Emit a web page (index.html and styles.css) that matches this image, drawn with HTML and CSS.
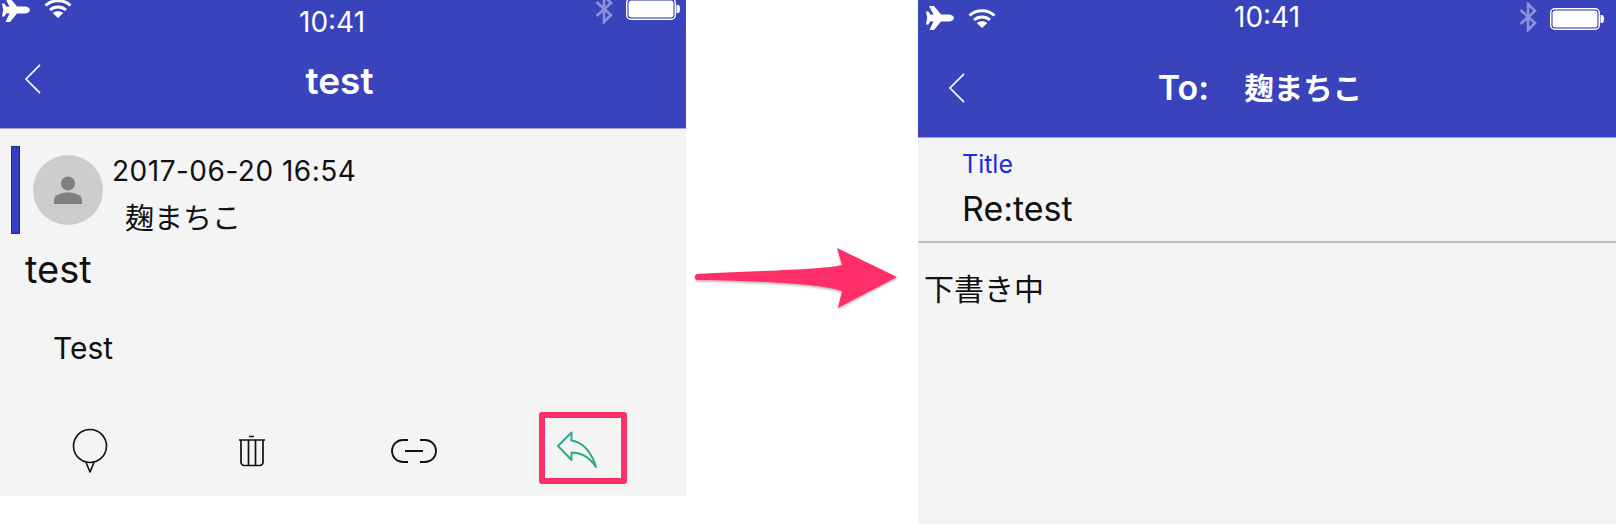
FILE: index.html
```html
<!DOCTYPE html>
<html lang="en">
<head>
  <meta charset="UTF-8">
  <title>Reply flow</title>
  <link rel="stylesheet" href="styles.css">
</head>
<body>
  <svg class="defs" width="0" height="0">
    <symbol id="plane" viewBox="0 0 28 24">
      <path d="M3 0 L8 0 L15 8.5 L23 8.5 C26 8.5 28 10.8 28 12 C28 13.2 26 15.5 23 15.5 L15 15.5 L8 24 L3.5 24 L7.5 15.5 L4.5 15.2 L2.4 18.5 L0 18.5 L1.2 12 L0 5.5 L2.4 5.5 L4.5 8.8 L7.5 8.5 Z" fill="#fff"/>
    </symbol>
    <symbol id="wifi" viewBox="0 0 28 20">
      <path d="M1.5 7.5 C8.5 1 19.5 1 26.5 7.5 M6 12 C10.5 8 17.5 8 22 12" fill="none" stroke="#fff" stroke-width="3"/>
      <path d="M14 20 L8.8 15 C11.5 12.6 16.5 12.6 19.2 15 Z" fill="#fff"/>
    </symbol>
    <symbol id="bt" viewBox="0 0 18 30">
      <path d="M1.5 8 L16 21 L9 28 L9 2 L16 9 L1.5 22" fill="none" stroke="#8b93dc" stroke-width="2.6"/>
    </symbol>
    <symbol id="batt" viewBox="0 0 54 22">
      <rect x="0.75" y="0.75" width="48.5" height="20.5" rx="4" fill="#1f2a9e" stroke="#fff" stroke-width="1.5"/>
      <rect x="2.5" y="2.5" width="45" height="17" rx="2.5" fill="#fff"/>
      <path d="M50.5 7 H52 C53.5 7 54 9 54 11 C54 13 53.5 15 52 15 H50.5 Z" fill="#fff"/>
    </symbol>
    <symbol id="back" viewBox="0 0 18 32">
      <path d="M16.5 1 L1.5 16 L16.5 31" fill="none" stroke="#fff" stroke-width="1.7"/>
    </symbol>
  </svg>

  <div class="screens">
    <section class="phone phone-left">
      <header class="app-header">
        <div class="status">
          <div class="status-side">
            <svg class="ic-plane"><use href="#plane"/></svg>
            <svg class="ic-wifi"><use href="#wifi"/></svg>
          </div>
          <div class="clock">10:41</div>
          <div class="status-side status-right">
            <svg class="ic-bt"><use href="#bt"/></svg>
            <svg class="ic-batt"><use href="#batt"/></svg>
          </div>
        </div>
        <div class="navbar">
          <svg class="ic-back"><use href="#back"/></svg>
          <div class="nav-title">test</div>
        </div>
      </header>

      <div class="phone-body">
        <div class="msg-head">
          <div class="msg-bar"></div>
          <div class="avatar">
            <svg width="30" height="28" viewBox="0 0 30 28">
              <circle cx="15" cy="7.5" r="7" fill="#808080"/>
              <path d="M1 28 V24 C1 18.5 9 16.5 15 16.5 C21 16.5 29 18.5 29 24 V28 Z" fill="#808080"/>
            </svg>
          </div>
          <div class="msg-meta">
            <div class="msg-date">2017-06-20 16:54</div>
            <div class="msg-from">麹まちこ</div>
          </div>
        </div>
        <div class="msg-subject">test</div>
        <div class="msg-text">Test</div>

        <div class="toolbar">
          <div class="tool">
            <svg width="36" height="46" viewBox="0 0 36 46">
              <circle cx="18" cy="18" r="16.5" fill="none" stroke="#111" stroke-width="1.6"/>
              <path d="M14 34.5 L18 44 L22 34.5" fill="none" stroke="#111" stroke-width="1.6" stroke-linejoin="round"/>
            </svg>
          </div>
          <div class="tool">
            <svg width="28" height="32" viewBox="0 0 28 32">
              <path d="M1 5 H27 M11 1.5 H16 M3 5 V27 C3 29 4.5 30.5 6 30.5 H22 C23.5 30.5 25 29 25 27 V5 M10.5 5 V30 M17.5 5 V30" fill="none" stroke="#111" stroke-width="1.7"/>
            </svg>
          </div>
          <div class="tool">
            <svg width="46" height="24" viewBox="0 0 46 24">
              <path d="M17 1 H12 A11 11 0 0 0 12 23 H17 M29 1 H34 A11 11 0 0 1 34 23 H29 M14 12 H32" fill="none" stroke="#111" stroke-width="1.8"/>
            </svg>
          </div>
          <div class="tool tool-reply">
            <div class="reply-box">
              <svg width="42" height="38" viewBox="0 0 42 38">
                <path d="M2 15 L15.5 1.5 V9.5 C27 11 36 22 40 36 C34 27 26 21.5 15.5 21.5 V29 Z" fill="none" stroke="#2bab8a" stroke-width="2" stroke-linejoin="round"/>
              </svg>
            </div>
          </div>
        </div>
      </div>
    </section>

    <section class="phone phone-right">
      <header class="app-header">
        <div class="status">
          <div class="status-side">
            <svg class="ic-plane"><use href="#plane"/></svg>
            <svg class="ic-wifi"><use href="#wifi"/></svg>
          </div>
          <div class="clock">10:41</div>
          <div class="status-side status-right">
            <svg class="ic-bt"><use href="#bt"/></svg>
            <svg class="ic-batt"><use href="#batt"/></svg>
          </div>
        </div>
        <div class="navbar">
          <svg class="ic-back"><use href="#back"/></svg>
          <div class="nav-title"><span class="to-label">To:</span><span class="to-name">麹まちこ</span></div>
        </div>
      </header>

      <div class="phone-body">
        <div class="title-field">
          <div class="field-label">Title</div>
          <div class="field-value">Re:test</div>
        </div>
        <div class="draft">下書き中</div>
      </div>
    </section>
  </div>

  <svg class="arrow" width="220" height="70" viewBox="0 0 220 70">
    <defs>
      <filter id="arrowShadow" x="-5%" y="-10%" width="110%" height="130%">
        <feDropShadow dx="0" dy="1.5" stdDeviation="1.2" flood-color="#000" flood-opacity="0.3"/>
      </filter>
    </defs>
    <path d="M7 34 C60 31 130 30 152 25 L147 8 L207 37 L148 68 L152 51 C130 43 60 41 7 40 C4 39 4 35 7 34 Z" fill="#fd2f68" filter="url(#arrowShadow)"/>
  </svg>
</body>
</html>
```

FILE: styles.css
```css
body {
  margin: 0;
  background-color: #FFFFFF;
  color: #111111;
  font-family: Inter, 'Noto Sans CJK JP', sans-serif;
  width: 1616px;
  height: 532px;
  overflow: hidden;
  position: relative;
}

.defs {
  position: absolute;
}

.screens {
  display: flex;
  justify-content: space-between;
  align-items: flex-start;
}

.phone {
  background-color: #F4F4F4;
  display: flex;
  flex-direction: column;
}

.phone-left {
  width: 686px;
  height: 496px;
}

.phone-right {
  width: 698px;
  height: 524px;
}

/* header */
.app-header {
  background-color: #3944BC;
  color: #FFFFFF;
  border-bottom: 1px solid #9FA5DC;
  overflow: hidden;
  flex-shrink: 0;
}

.phone-left .app-header {
  height: 128px;
}

.phone-right .app-header {
  height: 137px;
}

.status {
  display: grid;
  align-items: flex-start;
  height: 42px;
}

.phone-left .status {
  grid-template-columns: 297px auto 1fr;
  padding: 0 6px 0 2px;
  margin-top: -2px;
}

.phone-right .status {
  grid-template-columns: 308px auto 1fr;
  padding: 6px 12px 0 8px;
}

.status-side {
  display: flex;
  align-items: flex-start;
}

.status-right {
  justify-content: flex-end;
}

.ic-plane {
  width: 28px;
  height: 24px;
}

.ic-wifi {
  width: 28px;
  height: 20px;
  margin-left: 14px;
}

.ic-bt {
  width: 18px;
  height: 30px;
  margin-top: -4px;
}

.phone-right .ic-wifi,
.phone-right .ic-batt {
  margin-top: 2px;
}

.ic-batt {
  width: 54px;
  height: 22px;
  margin-left: 13px;
}

.clock {
  font-size: 28px;
  font-weight: 400;
  line-height: 30px;
}

.phone-left .clock {
  margin-top: 9px;
}

.phone-right .clock {
  margin-top: -4px;
}

.navbar {
  position: relative;
  display: flex;
  justify-content: center;
  align-items: center;
  height: 64px;
}

.phone-left .navbar {
  margin-top: 9px;
  padding-right: 7px;
}

.phone-right .navbar {
  margin-top: 8px;
  padding-right: 14px;
}

.ic-back {
  position: absolute;
  width: 18px;
  height: 30px;
}

.phone-left .ic-back {
  left: 24px;
  top: 15px;
}

.phone-right .ic-back {
  left: 30px;
  top: 17px;
}

.nav-title {
  font-size: 37px;
  font-weight: 600;
  line-height: 40px;
  display: flex;
  align-items: center;
}

.to-label {
  font-size: 34px;
}

.to-name {
  font-size: 29.5px;
  font-weight: 600;
  margin-left: 35px;
}

.phone-body {
  position: relative;
  flex: 1;
  display: flex;
  flex-direction: column;
}

/* left screen */
.msg-head {
  display: flex;
  margin: 17px 0 0 11px;
  height: 88px;
}

.msg-bar {
  width: 7px;
  height: 86px;
  background-color: #3340BD;
  border: 0.5px solid #1A249C;
}

.avatar {
  width: 70px;
  height: 70px;
  margin: 9px 0 0 13px;
  border-radius: 50%;
  background-color: #CDCDCD;
  display: flex;
  justify-content: center;
  align-items: center;
}

.msg-meta {
  margin: 8px 0 0 9px;
}

.msg-date {
  font-size: 28px;
  line-height: 34px;
  letter-spacing: 0.5px;
}

.msg-from {
  font-size: 29px;
  line-height: 40px;
  margin: 11px 0 0 13px;
}

.msg-subject {
  font-size: 38px;
  line-height: 44px;
  margin: 13px 0 0 25px;
}

.msg-text {
  font-size: 30px;
  line-height: 34px;
  margin: 40px 0 0 53px;
}

.toolbar {
  display: grid;
  grid-template-columns: repeat(4, 162px);
  padding-left: 9px;
  margin: auto 0 5px;
  height: 86px;
}

.tool {
  display: flex;
  justify-content: center;
  align-items: center;
  padding-top: 6px;
}

.tool-reply {
  justify-content: flex-start;
  padding: 0 0 0 44px;
}

.reply-box {
  width: 88px;
  height: 72px;
  box-sizing: border-box;
  border: 6px solid #FD2F68;
  border-radius: 3px;
  display: flex;
  align-items: center;
  padding: 3px 0 0 11px;
}

/* right screen */
.title-field {
  height: 105px;
  box-sizing: border-box;
  padding: 11px 0 0 44px;
  border-bottom: 2px solid #BDBDBD;
}

.field-label {
  font-size: 25px;
  line-height: 30px;
  color: #1A2FD8;
}

.field-value {
  font-size: 34px;
  line-height: 42px;
  margin-top: 9px;
}

.draft {
  font-size: 30px;
  line-height: 40px;
  margin: 26px 0 0 6px;
}

/* annotation arrow between the screens */
.arrow {
  position: absolute;
  left: 690px;
  top: 240px;
}
```
